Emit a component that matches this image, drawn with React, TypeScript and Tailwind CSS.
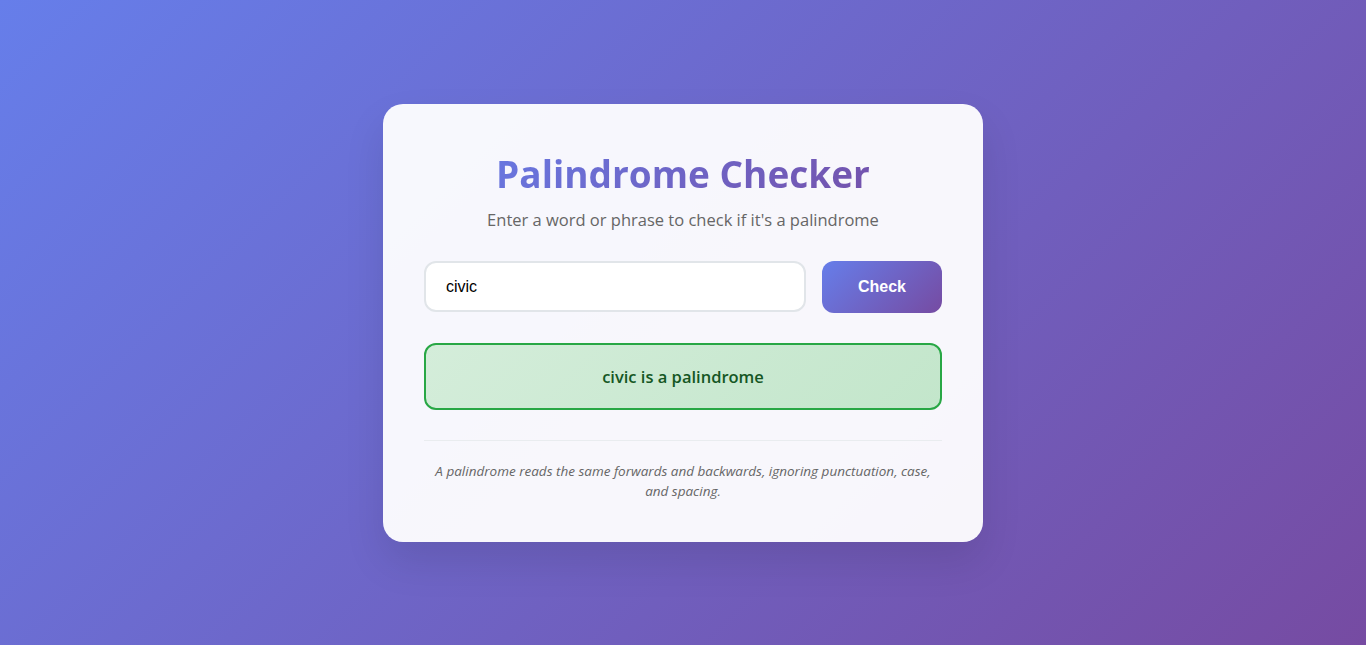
import { useState } from "react";

const App = () => {
  const [word, setWord] = useState("civic");
  const [checked, setChecked] = useState("civic");

  const clean = checked.toLowerCase().replace(/[^a-z0-9]/g, "");
  const isPalindrome = clean.length > 0 && clean === clean.split("").reverse().join("");

  return (
    <div className="min-h-screen w-full flex items-center justify-center bg-[linear-gradient(135deg,#667eea_0%,#764ba2_100%)] font-['Open_Sans',sans-serif]">
      <div className="w-[600px] bg-white/95 rounded-[20px] pt-10 pb-[41px] px-[41px] shadow-[0_20px_40px_rgba(0,0,0,0.1)] text-center">
        <h1 className="text-[37px] leading-[52px] font-bold bg-[linear-gradient(135deg,#667eea_0%,#764ba2_100%)] bg-clip-text text-transparent mb-[8px] mt-[4px]">
          Palindrome Checker
        </h1>
        <p className="text-[16.5px] leading-6 text-[#666] mb-[29px]">
          Enter a word or phrase to check if it's a palindrome
        </p>
        <div className="flex gap-4 items-center">
          <input
            value={word}
            onChange={(e) => setWord(e.target.value)}
            className="flex-1 h-[51px] px-5 text-base border-2 border-[#e1e5e9] rounded-xl bg-white outline-none font-['Liberation_Sans',Arial,sans-serif] text-black"
          />
          <button
            onClick={() => setChecked(word)}
            className="w-[120px] h-[52px] rounded-xl text-white font-bold text-base bg-[linear-gradient(135deg,#667eea_0%,#764ba2_100%)] font-['Liberation_Sans',Arial,sans-serif]"
          >
            Check
          </button>
        </div>
        <div
          className={
            isPalindrome
              ? "mt-[30px] h-[67px] pt-[3px] flex items-center justify-center rounded-xl border-2 border-[#28a745] bg-[linear-gradient(135deg,#d4edda_0%,#c3e6cb_100%)] text-[#155724] text-[16.5px] font-semibold"
              : "mt-[30px] h-[67px] pt-[3px] flex items-center justify-center rounded-xl border-2 border-[#dc3545] bg-[linear-gradient(135deg,#f8d7da_0%,#f5c6cb_100%)] text-[#721c24] text-[16.5px] font-semibold"
          }
        >
          {checked} {isPalindrome ? "is a palindrome" : "is not a palindrome"}
        </div>
        <div className="mt-[30px] pt-5 border-t border-[#e9ecef] text-[13.5px] leading-5 italic text-[#666]">
          A palindrome reads the same forwards and backwards, ignoring punctuation, case, and spacing.
        </div>
      </div>
    </div>
  );
};

export default App;
